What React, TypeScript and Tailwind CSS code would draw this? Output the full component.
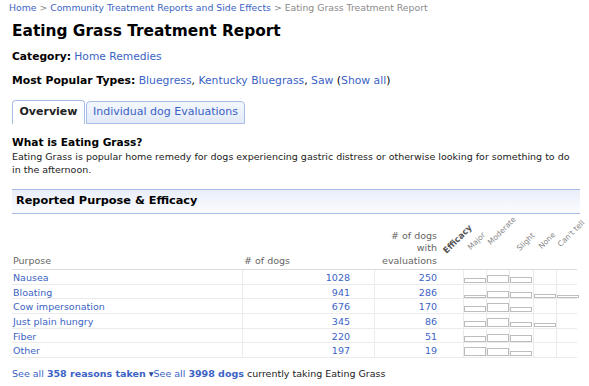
import React from "react";

const rows = [
  { purpose: "Nausea", dogs: 1028, evals: 250, bars: [3, 6, 4, 0, 0] },
  { purpose: "Bloating", dogs: 941, evals: 286, bars: [1, 5, 4, 2, 1] },
  { purpose: "Cow impersonation", dogs: 676, evals: 170, bars: [4, 7, 3, 0, 0] },
  { purpose: "Just plain hungry", dogs: 345, evals: 86, bars: [4, 7, 3, 2, 0] },
  { purpose: "Fiber", dogs: 220, evals: 51, bars: [4, 6, 5, 0, 0] },
  { purpose: "Other", dogs: 197, evals: 19, bars: [7, 6, 3, 0, 0] },
];

const labels = [
  { text: "Major", left: 11, bottom: 16 },
  { text: "Moderate", left: 31, bottom: 21 },
  { text: "Slight", left: 60, bottom: 15 },
  { text: "None", left: 82, bottom: 17 },
  { text: "Can't tell", left: 101, bottom: 19 },
];

const grid = "grid grid-cols-[230px_132px_89px_23px_23px_24px_23px_24px]";

function Bar({ h }: { h: number }) {
  if (!h) return null;
  return (
    <div
      className="w-[22px] border border-[#bdbdbd] bg-white"
      style={{ height: h + 2 }}
    />
  );
}

export default function App() {
  return (
    <div className="w-[589px] h-[386px] overflow-hidden bg-white font-['DejaVu_Sans',sans-serif] text-black">
      <div className="pl-[9px] pt-[2px] text-[9.3px] leading-[12px] text-[#8a8a8a]">
        <a className="text-[#3b63c4]">Home</a> &gt;{" "}
        <a className="text-[#3b63c4]">Community Treatment Reports and Side Effects</a> &gt;{" "}
        Eating Grass Treatment Report
      </div>

      <div className="px-3">
        <h1 className="mt-[7px] text-[15.4px] leading-[20px] font-bold">
          Eating Grass Treatment Report
        </h1>

        <p className="mt-[9px] text-[10.7px] leading-[14px]">
          <b>Category:</b> <a className="text-[#3b63c4]">Home Remedies</a>
        </p>

        <p className="mt-[10px] text-[10.8px] leading-[14px]">
          <b>Most Popular Types:</b> <a className="text-[#3b63c4]">Bluegress</a>,{" "}
          <a className="text-[#3b63c4]">Kentucky Bluegrass</a>,{" "}
          <a className="text-[#3b63c4]">Saw</a> (<a className="text-[#3b63c4]">Show all</a>)
        </p>

        <div className="mt-[12px] flex items-end h-[24px]">
          <div className="h-[24px] w-[73px] rounded-t-[4px] border border-b-0 border-[#a8bde6] bg-white flex items-center justify-center text-[11px] font-bold text-[#222]">
            Overview
          </div>
          <div className="ml-px h-[23px] w-[159px] rounded-t-[4px] border border-[#a8bde6] bg-gradient-to-b from-[#f4f7fd] to-[#e2eaf8] flex items-center justify-center text-[11px] text-[#3b63c4]">
            Individual dog Evaluations
          </div>
        </div>

        <h2 className="mt-[11px] text-[10.6px] leading-[14px] font-bold">What is Eating Grass?</h2>
        <p className="mt-[1px] text-[9.5px] leading-[13px] text-[#222]">
          Eating Grass is popular home remedy for dogs experiencing gastric distress or otherwise looking for something to do in the afternoon.
        </p>

        <div className="mt-[13px] w-[568px] h-[25px] border-y border-[#a8bde6] bg-gradient-to-b from-[#e9eef9] to-[#fbfcff] flex items-center pl-1 text-[11.3px] font-bold">
          Reported Purpose &amp; Efficacy
        </div>

        <div className={`${grid} mt-[12px] h-[44px] border-b border-[#dcdcdc] text-[9.5px] leading-[12.5px] text-[#666]`}>
          <div className="self-end pb-[2px] pl-px">Purpose</div>
          <div className="self-end pb-[2px] pl-[2px]">&#35; of dogs</div>
          <div className="self-end pb-[2px] pr-[26px] text-right">
            &#35; of dogs
            <br />
            with
            <br />
            evaluations
          </div>
          <div className="col-span-5 relative">
            <span className="absolute left-[-14px] bottom-[13px] origin-bottom-left -rotate-45 text-[8.5px] font-bold text-[#555] whitespace-nowrap">
              Efficacy
            </span>
            {labels.map((l) => (
              <span
                key={l.text}
                className="absolute origin-bottom-left -rotate-45 text-[7.6px] text-[#888] whitespace-nowrap"
                style={{ left: l.left, bottom: l.bottom }}
              >
                {l.text}
              </span>
            ))}
          </div>
        </div>

        {rows.map((r) => (
          <div
            key={r.purpose}
            className={`${grid} h-[14.7px] border-b border-[#ebebeb] text-[9.5px] leading-[14px]`}
          >
            <div className="pl-px pt-[1px] text-[#3b63c4]">{r.purpose}</div>
            <div className="border-l border-[#ebebeb] pt-[1px] pr-[24px] text-right text-[#3b63c4]">{r.dogs}</div>
            <div className="border-l border-[#ebebeb] pt-[1px] pr-[26px] text-right text-[#3b63c4]">{r.evals}</div>
            {r.bars.map((h, i) => (
              <div key={i} className="border-l border-[#ebebeb] flex items-end pb-[2px]">
                <Bar h={h} />
              </div>
            ))}
          </div>
        ))}

        <p className="mt-[9px] text-[9.5px] leading-[13px] text-[#222]">
          <a className="text-[#3b63c4]">
            See all <b>358 reasons taken</b>
          </a>{" "}
          <a className="text-[#3b63c4]">
            <span className="text-[#2a4a9a]">&#9662;</span>See all <b>3998 dogs</b>
          </a>{" "}
          currently taking Eating Grass
        </p>
      </div>
    </div>
  );
}
